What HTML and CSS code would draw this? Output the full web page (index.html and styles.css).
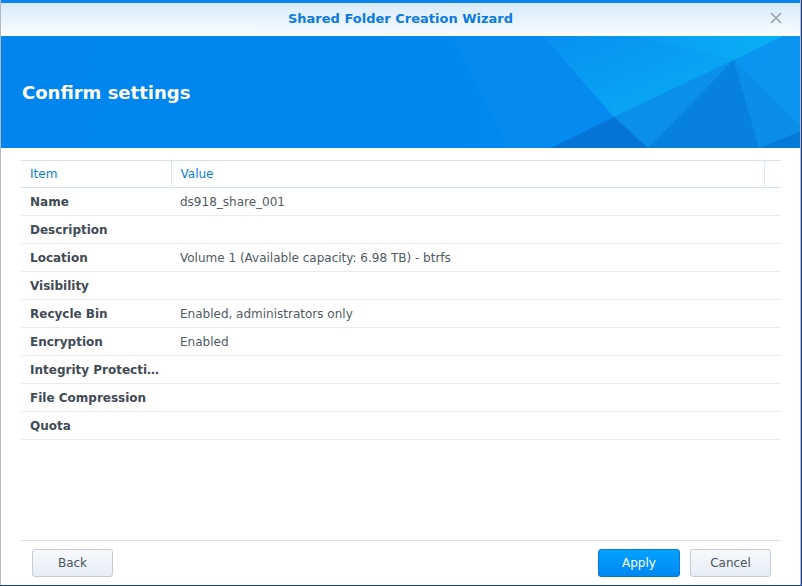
FILE: index.html
```html
<!DOCTYPE html>
<html>
<head>
<meta charset="utf-8">
<link rel="stylesheet" href="styles.css">
</head>
<body>
<div class="window">
  <div class="topstrip"></div>
  <div class="titlebar">
    <span class="title">Shared Folder Creation Wizard</span>
    <svg class="close" width="12" height="12" viewBox="0 0 12 12"><path d="M1 1L11 11M11 1L1 11" stroke="#9aa1a8" stroke-width="1.6" fill="none"/></svg>
  </div>
  <div class="banner">
    <svg class="banner-art" width="800" height="112" viewBox="0 0 800 112" preserveAspectRatio="none">
      <defs>
        <linearGradient id="gA" x1="0" y1="0" x2="1" y2="1">
          <stop offset="0" stop-color="#0890f1"/>
          <stop offset="1" stop-color="#0aaef5"/>
        </linearGradient>
        <linearGradient id="gB" x1="0" y1="0" x2="1" y2="0">
          <stop offset="0" stop-color="#0a9cf3"/>
          <stop offset="1" stop-color="#0ab0f6"/>
        </linearGradient>
      </defs>
      <polygon points="450,0 542,0 613,81 550,112 506,112" fill="#058af0"/>
      <polygon points="542,0 634,0 733,24 613,81" fill="url(#gA)"/>
      <polygon points="634,0 783,0 733,24" fill="url(#gB)"/>
      <polygon points="783,0 800,0 800,90 733,24" fill="#0a96f0"/>
      <polygon points="613,81 733,24 647,112" fill="#0a8fea"/>
      <polygon points="550,112 613,81 647,112" fill="#0674d6"/>
      <polygon points="733,24 647,112 758,112" fill="#0781df"/>
      <polygon points="733,24 758,112 800,112 800,90" fill="#0a8ee8"/>
      <polygon points="758,112 800,95 800,112" fill="#067ada"/>
    </svg>
    <h1 class="heading">Confirm settings</h1>
  </div>
  <div class="content">
    <table class="grid">
      <colgroup><col class="c1"><col class="c2"><col class="c3"></colgroup>
      <thead>
        <tr><th>Item</th><th>Value</th><th class="pad"></th></tr>
      </thead>
      <tbody>
        <tr><td>Name</td><td colspan="2">ds918_share_001</td></tr>
        <tr><td>Description</td><td colspan="2"></td></tr>
        <tr><td>Location</td><td colspan="2">Volume 1 (Available capacity: 6.98 TB) - btrfs</td></tr>
        <tr><td>Visibility</td><td colspan="2"></td></tr>
        <tr><td>Recycle Bin</td><td colspan="2">Enabled, administrators only</td></tr>
        <tr><td>Encryption</td><td colspan="2">Enabled</td></tr>
        <tr><td>Integrity Protection</td><td colspan="2"></td></tr>
        <tr><td>File Compression</td><td colspan="2"></td></tr>
        <tr><td>Quota</td><td colspan="2"></td></tr>
      </tbody>
    </table>
  </div>
  <div class="footer">
    <button class="btn">Back</button>
    <div class="spacer"></div>
    <button class="btn primary">Apply</button>
    <button class="btn">Cancel</button>
  </div>
</div>
</body>
</html>
```

FILE: styles.css
```css
html, body {
  margin: 0;
  padding: 0;
}
body {
  background: #1d3f8f;
  width: 802px;
  height: 586px;
  overflow: hidden;
  font-family: "DejaVu Sans", Verdana, sans-serif;
}
.window {
  width: 799px;
  height: 585px;
  background: #fff;
  border-left: 1px solid #b4b9bf;
  border-right: 1px solid #b4b9bf;
  display: flex;
  flex-direction: column;
}
.topstrip {
  height: 3px;
  background: #0a86ea;
}
.titlebar {
  height: 33px;
  background: linear-gradient(#d6eafb, #fbfdff);
  display: flex;
  align-items: center;
  justify-content: center;
  position: relative;
}
.title {
  font-weight: bold;
  font-size: 13px;
  color: #0b7bdd;
  padding-bottom: 2px;
}
.close {
  position: absolute;
  right: 18px;
  top: 9px;
}
.banner {
  height: 112px;
  background: linear-gradient(90deg, #0085ef, #0088ef 60%, #0a8eee);
  position: relative;
  display: flex;
  align-items: center;
  overflow: hidden;
}
.banner-art {
  position: absolute;
  left: 0;
  top: 0;
}
.heading {
  position: relative;
  margin: 0 0 0 21px;
  font-size: 18px;
  font-weight: bold;
  color: #fff;
  padding-top: 1px;
}
.content {
  flex: 1;
  padding: 12px 19px 0 20px;
}
.grid {
  width: 760px;
  border-collapse: collapse;
  table-layout: fixed;
  font-size: 12px;
}
.c1 { width: 150px; }
.c3 { width: 17px; }
.grid th {
  height: 26px;
  text-align: left;
  font-weight: normal;
  color: #0a7fd9;
  padding: 0 9px;
  border-top: 1px solid #d5e4f1;
  border-bottom: 1px solid #d5e4f1;
  border-left: 1px solid #dbe7f2;
}
.grid th:first-child { border-left: none; }
.grid td {
  height: 27px;
  padding: 0 9px;
  border-bottom: 1px solid #e8ebee;
  color: #4f5a65;
  white-space: nowrap;
  overflow: hidden;
  text-overflow: ellipsis;
}
.grid td:first-child {
  font-weight: bold;
  color: #414b56;
}
.footer {
  margin: 0 19px 8px 20px;
  border-top: 1px solid #dfe3e7;
  padding: 8px 10px 0 11px;
  display: flex;
  gap: 10px;
}
.spacer { flex: 1; }
.btn {
  height: 28px;
  width: 81px;
  border: 1px solid #c4ccd5;
  border-radius: 3px;
  background: linear-gradient(#f7f9fc, #e8eef5);
  font-family: "DejaVu Sans", Verdana, sans-serif;
  font-size: 12px;
  color: #4a5561;
  padding: 0 0 1px 0;
}
.btn.primary {
  width: 82px;
  border-color: #0a78d6;
  background: linear-gradient(#03a2ff, #0087f1);
  color: #fff;
}
```
